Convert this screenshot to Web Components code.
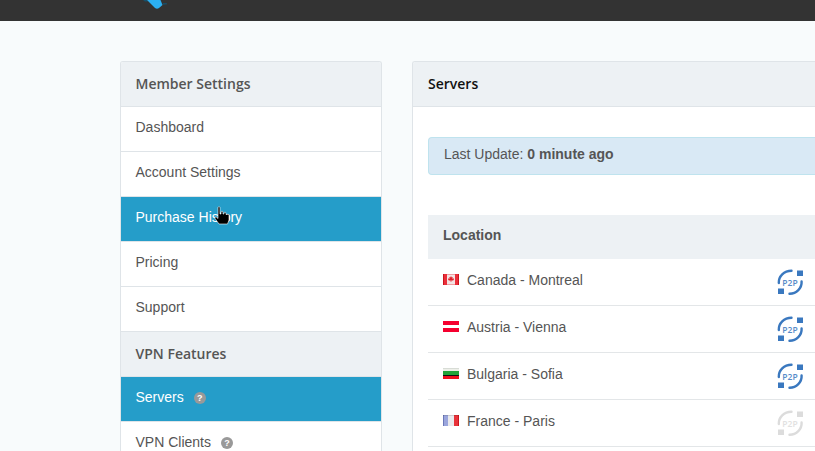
<!DOCTYPE html>
<html>
<head>
<style>
	html,body{margin:0; padding:0; height:451px; overflow:hidden; background:#f8fbfc; color:#555; font:14px/20px "Liberation Sans",Arial,sans-serif;}
	.layout{display:grid; grid-template-columns:262px 403px; column-gap:30px; height:390px; padding:40px 0 0 120px;}
	.cursor{position:absolute; left:214px; top:206px; width:16px; height:20px;}
</style>
</head>
<body>
<top-bar></top-bar>
<div class="layout">
	<ui-panel>
		<nav-head>Member Settings</nav-head>
		<nav-item>Dashboard</nav-item>
		<nav-item>Account Settings</nav-item>
		<nav-item active>Purchase History</nav-item>
		<nav-item>Pricing</nav-item>
		<nav-item>Support</nav-item>
		<nav-head>VPN Features</nav-head>
		<nav-item active help>Servers</nav-item>
		<nav-item help>VPN Clients</nav-item>
	</ui-panel>
	<ui-panel cut>
		<nav-head dark>Servers</nav-head>
		<server-list>
			<info-alert>Last Update: <b>0 minute ago</b></info-alert>
			<table-head>Location</table-head>
			<server-row flag="ca">Canada - Montreal</server-row>
			<server-row flag="at">Austria - Vienna</server-row>
			<server-row flag="bg">Bulgaria - Sofia</server-row>
			<server-row flag="fr" off>France - Paris</server-row>
		</server-list>
	</ui-panel>
</div>

<!-- mouse pointer from the screenshot -->
<svg class="cursor" viewBox="0 0 16 20">
	<path d="M4 1.500c0-1 2-1 2 0V8l1 0V6c0-1 2-1 2 0v2l1 0V7c0-1 2-1 2 0v1.500l1 0c1-.5 2 0 2 1V14l-1.500 4H5L1 12.500c-.6-1 .6-2 1.500-1.300L4 12.500z" fill="#000" stroke="#fff" stroke-width=".6"/>
</svg>

<script>
	// 공통 등록 함수
	function define(name, html, init){
		customElements.define(name, class extends HTMLElement{
			connectedCallback(){
				if(this.shadowRoot) return;
				this.attachShadow({mode : 'open'});
				this.shadowRoot.innerHTML = html;
				if(init) init(this);
			}
		});
	}

	define('top-bar', `
		<style>
			:host{display:block; height:21px; background:#333; overflow:hidden;}
			svg{display:block; margin-left:142px;}
		</style>
		<svg width="28" height="11" viewBox="0 0 28 11">
			<path d="M1 0h4l1 1.500H3z" fill="#17506b"/>
			<path d="M21 3l4 .2v1l-4 .6z" fill="#17506b"/>
			<path d="M5 0h13.500l2 5-3.500 3q-2 1.500-4 0z" fill="#2bb0f2"/>
		</svg>`);

	define('ui-panel', `
		<style>
			:host{display:block; background:#fff; border:1px solid #dfe4e8; border-bottom:0; border-radius:3px 3px 0 0; overflow:hidden;}
			:host([cut]){border-right:0; border-radius:3px 0 0 0;}
		</style>
		<slot></slot>`);

	define('nav-head', `
		<style>
			:host{display:block; height:44px; padding:0 15px 0 14.5px; background:#edf1f4; border-bottom:1px solid #dfe4e8; font:600 14px/44px "Open Sans",sans-serif; color:#555;}
			:host([dark]){color:#111; padding-left:15px;}
		</style>
		<slot></slot>`);

	define('nav-item', `
		<style>
			:host{display:flex; align-items:flex-start; height:34px; padding:10px 15px 0 14.5px; background:#fff; border-bottom:1px solid #dfe4e8; color:#555;}
			:host([active]){background:#259dc9; color:#fff;}
			.q{display:none; width:12px; height:12px; margin:5px 0 0 10px; border-radius:50%; background:#999; color:#fff; font:bold 9px/12px "Liberation Sans",sans-serif; text-align:center;}
			:host([help]) .q{display:block;}
		</style>
		<slot></slot><span class="q">?</span>`);

	define('server-list', `
		<style>
			:host{display:block; padding:30px 0 0 15px;}
		</style>
		<slot></slot>`);

	define('info-alert', `
		<style>
			:host{display:block; padding:6px 15px 10px; height:20px; margin-bottom:40px; background:#d9e9f5; border:1px solid #bfe3ee; border-right:0; border-radius:4px 0 0 4px; color:#555;}
		</style>
		<slot></slot>`);

	define('table-head', `
		<style>
			:host{display:block; height:44px; padding:0 15px; background:#edf1f4; font:bold 14px/40px "Liberation Sans",sans-serif; color:#555;}
		</style>
		<slot></slot>`);

	const flags = {
		ca : '<rect width="16" height="11" fill="#f3e4e4"/><rect width="16" height="1" fill="#eea0a4"/><rect y="10" width="16" height="1" fill="#eea0a4"/><rect width="1" height="11" fill="#c9141e"/><rect x="1" width="3" height="11" fill="#ea2f3a"/><rect x="12" width="3" height="11" fill="#ea2f3a"/><rect x="15" width="1" height="11" fill="#c9141e"/><path d="M8 2l.8 1.400 1-.4-.4 2 1.300-.8.300 1-.8 1.300H8.300V8h-.6V6.500H5.800L5 5.200l.3-1 1.300.8-.4-2 1 .4z" fill="#e0222c"/>',
		at : '<rect width="16" height="11" fill="#f5002f"/><rect y="4" width="16" height="3" fill="#fff"/>',
		bg : '<rect width="16" height="4" fill="#eef0ea"/><rect width="16" height="1" fill="#d8dcd6"/><rect y="3" width="16" height="4" fill="#22a43a"/><rect y="7" width="16" height="1" fill="#111"/><rect y="8" width="16" height="3" fill="#ef1020"/>',
		fr : '<rect width="16" height="11" fill="#e9e9ec"/><rect width="5" height="11" fill="#9aa5dc"/><rect width="1" height="11" fill="#6c78b8"/><rect x="11" width="5" height="11" fill="#e8333a"/><rect x="15" width="1" height="11" fill="#c9141e"/><rect width="16" height="1" fill="#000" opacity=".12"/>'
	};

	define('flag-icon', `
		<style>
			:host{display:block; width:16px; height:11px;}
			svg{display:block;}
		</style>
		<svg width="16" height="11" viewBox="0 0 16 11"></svg>`);

	define('p2p-icon', `
		<style>
			:host{display:block; width:28px; height:28px; color:#3a78bf;}
			:host([off]){color:#dcdcdc;}
			svg{display:block;}
			text{font:600 8.5px "Open Sans",sans-serif; fill:currentColor; opacity:.85;}
		</style>
		<svg width="28" height="28" viewBox="0 0 28 28" fill="none">
			<path d="M2.800 15C2.500 8.500 8 2.800 15.500 2.800" stroke="currentColor" stroke-width="2.400" stroke-linecap="round"/>
			<path d="M25.600 13.500C26 20 20.500 25.800 13.500 25.700" stroke="currentColor" stroke-width="2.400" stroke-linecap="round"/>
			<rect x="21" y="2.500" width="6" height="5.500" fill="currentColor"/>
			<rect x="2" y="20.500" width="6" height="5.500" fill="currentColor"/>
			<text x="14" y="17.500" text-anchor="middle">P2P</text>
		</svg>`);

	define('server-row', `
		<style>
			:host{display:grid; grid-template-columns:333px 28px; height:46px; padding-left:15px; background:#fff; border-bottom:1px solid #e3e6e8; color:#555;}
			.name{display:flex; gap:8px; padding-top:11px;}
			flag-icon{margin-top:4px;}
			p2p-icon{margin-top:9px;}
		</style>
		<div class="name"><flag-icon></flag-icon><span><slot></slot></span></div>
		<p2p-icon></p2p-icon>`, row => {
			// 속성을 안쪽 아이콘으로 넘긴다
			let root = row.shadowRoot;
			root.querySelector('flag-icon').shadowRoot.querySelector('svg').innerHTML = flags[row.getAttribute('flag')];
			if(row.hasAttribute('off')) root.querySelector('p2p-icon').setAttribute('off', '');
		});
</script>
</body>
</html>
